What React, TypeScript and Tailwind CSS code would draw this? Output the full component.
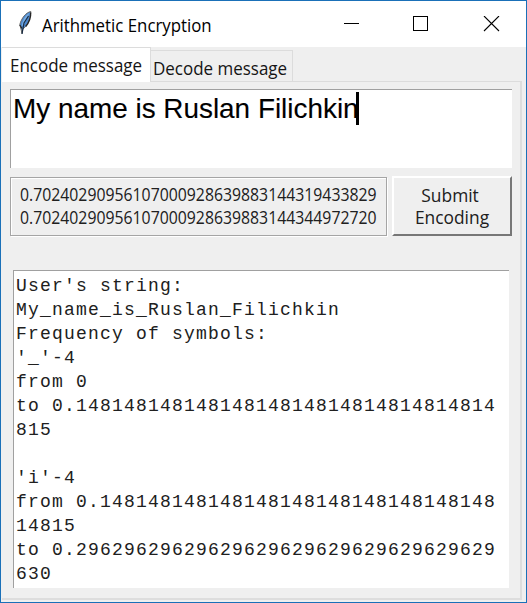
import React from "react";

const report = `User's string:
My_name_is_Ruslan_Filichkin
Frequency of symbols:
'_'-4
from 0
to 0.14814814814814814814814814814814814
815

'i'-4
from 0.148148148148148148148148148148148
14815
to 0.29629629629629629629629629629629629
630`;

function Feather() {
  return (
    <svg width="16" height="26" viewBox="0 0 16 26" className="ml-[17px] mt-[9px] shrink-0">
      <path d="M12.8 1.5C8 2.5 3.5 8 1.8 14.5L3 19l1 4.5.8-4.5c4-2.500 7.500-9 8-17.500Z" fill="#4a87cf" stroke="#6b6964" strokeWidth="1" />
      <path d="M11.5 3C7 5.500 4.500 10 3.500 17l3-3Z" fill="#78acdf" />
      <path d="M12.700 2.500c.3 5-2.500 11-5 14M1.800 15l2.200 3.500" fill="none" stroke="#262626" strokeWidth="1.300" />
      <path d="M10.500 6 6 13l-2 11" fill="none" stroke="#182b43" strokeWidth="1.200" />
    </svg>
  );
}

function TitleBar() {
  return (
    <header className="flex h-[46px] shrink-0 bg-white">
      <Feather />
      <h1 className="ml-2 mt-[11px] w-[280px] origin-left scale-x-[0.885] whitespace-nowrap text-[19px] leading-[26px]">Arithmetic Encryption</h1>
      <div className="ml-auto flex pt-[15px] pr-[25px]" aria-label="Window controls">
        <svg width="164" height="16" viewBox="0 0 164 16" fill="none" stroke="#000" shapeRendering="crispEdges">
          <path d="M7 7.500h15M76.500.500h14v14h-14z" />
          <path d="m147 0 15 15m0-15-15 15" shapeRendering="auto" strokeWidth="1.100" />
        </svg>
      </div>
    </header>
  );
}

export default function App() {
  return (
    <main className="flex h-[603px] w-[527px] flex-col overflow-hidden border border-[#1a70b8] bg-[#efefef] font-['Open_Sans','Noto_Sans',sans-serif] text-black">
      <TitleBar />
      <nav className="flex h-[34px] shrink-0 items-end pl-px text-[18px] leading-[26px] text-[#151515]">
        <div className="h-[34px] w-[149px] overflow-hidden border-t border-r border-[#dcdcdc] bg-white pt-[4px] pl-[8px]">
          <span className="block w-[170px] origin-left scale-x-[0.943] whitespace-nowrap">Encode message</span>
        </div>
        <div className="h-[31px] w-[142px] overflow-hidden border-t border-r border-[#dcdcdc] pt-[4px] pl-[2px]">
          <span className="block w-[170px] origin-left scale-x-[0.943] whitespace-nowrap">Decode message</span>
        </div>
      </nav>
      <section className="mr-[4px] mb-[2px] ml-px flex min-h-0 flex-1 flex-col border-r-2 border-b-2 border-[#dddddd] pl-[8px]">
        <div className="flex h-px shrink-0 -mr-[2px] -ml-[8px]">
          <div className="w-[148px] bg-white" />
          <div className="flex-1 bg-[#dcdcdc]" />
        </div>
        <div className="mt-[7px] h-[79px] w-[502px] shrink-0 border-t border-l border-[#a0a0a0] bg-white pl-[2px]">
          <div className="flex pt-[2px] font-['Liberation_Sans',Arial,sans-serif] text-[28px] leading-[33px] whitespace-nowrap [-webkit-text-stroke:0.1px_#000]">
            <span className="w-[343px] origin-left scale-x-[0.996]">My name is Ruslan Filichkin</span>
            <span className="h-[33px] w-[3px] bg-black" />
          </div>
        </div>
        <div className="mt-[8px] flex h-[61px] shrink-0 text-[18px] leading-[22.500px] text-[#202020]">
          <div className="mt-px h-[59px] w-[377px] overflow-hidden border border-[#a5a5a5] pt-[5px] pl-[9px] shadow-[1px_1px_0_#fff,inset_1px_1px_0_#fff]">
            <div className="w-[450px] origin-left scale-x-[0.878]">
              <p>0.70240290956107000928639883144319433829</p>
              <p>0.70240290956107000928639883144344972720</p>
            </div>
          </div>
          <button className="ml-[5px] h-[60px] w-[120px] border-t-2 border-r-2 border-b-2 border-l-2 border-t-white border-r-[#777] border-b-[#777] border-l-white text-center">
            <span className="block origin-center scale-x-[0.965]"><span className="relative -left-[2px]">Submit</span><br />Encoding</span>
          </button>
        </div>
        <pre className="mt-[33px] ml-[3px] h-[318px] w-[496px] shrink-0 overflow-hidden border-t border-l border-[#a0a0a0] bg-white pt-[3px] pl-[2px] font-['Liberation_Mono','Courier_New',monospace] text-[18px] leading-6 tracking-[1.198px] text-[#202020]">{report}</pre>
      </section>
    </main>
  );
}
